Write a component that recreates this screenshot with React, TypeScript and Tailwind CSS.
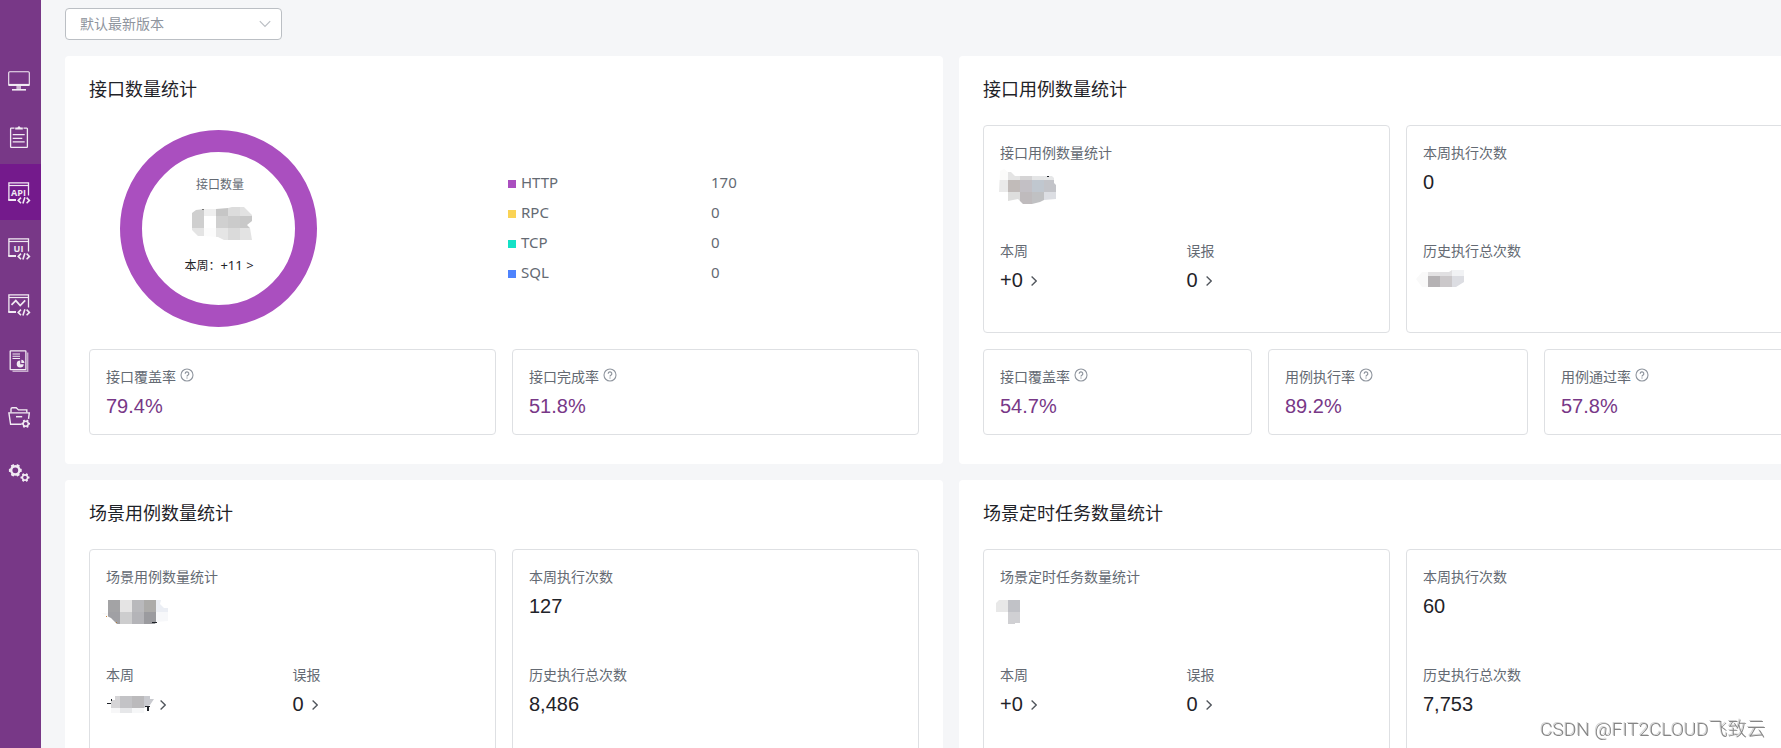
import React from "react";

type Cell = [x: number, y: number, w: number, h: number, fill: string];

interface MosaicShape {
  id: string;
  dx: number;
  dy: number;
  clip: string;
  cells: Cell[];
  specks?: Cell[];
}

// Pixelated blocks that hide sensitive counts
const MOSAICS: Record<string, MosaicShape> = {
  apiTotal: {
    id: "api-total",
    dx: 72,
    dy: 77,
    clip: "0,6 4,3 12,2 24,2 36,1 40,0 52,0 60,8 60,14 55,18 58,21 60,33 32,33 26,30 12,29 6,29 0,23",
    cells: [
      [0, 0, 12, 9, "#cfcfcf"], [12, 0, 12, 9, "#efefef"], [24, 0, 12, 9, "#c6c6c6"], [36, 0, 12, 9, "#dcdcdc"], [48, 0, 12, 9, "#e2e2e2"],
      [0, 9, 12, 12, "#cfcfcf"], [24, 9, 12, 12, "#d0d0d0"], [36, 9, 12, 12, "#cbcbcb"], [48, 9, 12, 12, "#c8c8c8"],
      [0, 21, 12, 12, "#e4e4e4"], [12, 21, 12, 12, "#fcfcfc"], [24, 21, 12, 12, "#e5e5e5"], [36, 21, 12, 12, "#dadada"], [48, 21, 12, 12, "#e3e3e3"],
    ],
    specks: [[10, 2, 2, 1, "#777777"]],
  },
  apiCase: {
    id: "api-case",
    dx: -1,
    dy: 1,
    clip: "1,2 5,0 9,3 12,3 16,7 53,7 55,9 55,14 57,16 57,30 45,31 41,33 33,35 24,35 19,30 9,32 9,23 0,23",
    cells: [
      [0, 0, 9, 11, "#fbfbfa"], [9, 0, 12, 11, "#e4e4e4"], [21, 0, 12, 11, "#d5d4d5"], [33, 0, 12, 11, "#e4e5e6"], [45, 0, 12, 11, "#e6e7e8"],
      [0, 11, 9, 12, "#eaeaea"], [9, 11, 12, 12, "#c1bbb9"], [21, 11, 12, 12, "#c3c0c5"], [33, 11, 12, 12, "#c0c7cf"], [45, 11, 12, 12, "#c3c4c9"],
      [9, 23, 12, 12, "#dededd"], [21, 23, 12, 12, "#bfbbbd"], [33, 23, 12, 12, "#c0c1c3"], [45, 23, 12, 12, "#dcdee3"],
    ],
    specks: [[48, 7, 2, 1, "#1f2329"]],
  },
  apiHistory: {
    id: "api-history",
    dx: -7,
    dy: 4,
    clip: "0,9 6,2 33,2 36,0 48,0 48,12 40,17 6,17",
    cells: [
      [0, 0, 12, 17, "#f9f9f9"], [12, 0, 12, 6, "#e3e2e3"], [24, 0, 12, 6, "#e1e0e2"], [36, 0, 12, 6, "#f1f2f4"],
      [12, 6, 12, 11, "#b5b2b4"], [24, 6, 12, 11, "#cbc8ca"], [36, 6, 12, 11, "#dcdde2"],
    ],
  },
  sceneCase: {
    id: "scene-case",
    dx: -5,
    dy: 8,
    clip: "7,0 60,0 59,4 63,8 67,8 67,21 55,22 54,24 16,24 10,18 0,13 7,13",
    cells: [
      [7, 0, 12, 12, "#a3a3a5"], [19, 0, 12, 12, "#e5e4e4"], [31, 0, 12, 12, "#b9b9bc"], [43, 0, 12, 12, "#acaba9"], [55, 0, 12, 12, "#ebeef4"],
      [0, 12, 7, 12, "#fafafa"], [7, 12, 12, 12, "#a0a0a4"], [19, 12, 12, 12, "#cdcdce"], [31, 12, 12, 12, "#b4b4b8"], [43, 12, 12, 12, "#9b9b9f"], [55, 12, 12, 12, "#f7f8fa"],
    ],
    specks: [[51, 22, 5, 1, "#1f2329"], [5, 16, 1, 1, "#d08a3a"], [15, 22, 1, 1, "#b07a3a"]],
  },
  sceneWeek: {
    id: "scene-week",
    dx: 1,
    dy: 6,
    clip: "8,0 43,0 43,3 47,3 43,9 37,12 37,17 4,17 4,4 8,4",
    cells: [
      [4, 0, 9, 12, "#d6d5d7"], [13, 0, 12, 12, "#c3c3c6"], [25, 0, 12, 12, "#bbbabc"], [37, 0, 10, 12, "#c9cacf"],
      [4, 12, 9, 5, "#f7f7f8"], [13, 12, 12, 5, "#e6e7e9"], [25, 12, 12, 5, "#f6f7f8"],
    ],
    specks: [[0, 7, 4, 1, "#1f2329"], [4, 3, 1, 2, "#1f2329"], [38, 10, 5, 1, "#1f2329"], [40, 11, 2, 4, "#1f2329"]],
  },
  task: {
    id: "task",
    dx: -4,
    dy: 8,
    clip: "0,3 3,0 24,0 24,23 19,23 19,24 12,24 12,12 0,12",
    cells: [[0, 0, 12, 12, "#e8e8e8"], [12, 0, 12, 12, "#c1c2c7"], [12, 12, 12, 12, "#d0d0d3"]],
  },
};

function MosaicCells({ shape }: { shape: MosaicShape }) {
  return (
    <g transform={`translate(${shape.dx} ${shape.dy})`} shapeRendering="crispEdges">
      <clipPath id={shape.id}>
        <polygon points={shape.clip} />
      </clipPath>
      <g clipPath={`url(#${shape.id})`}>
        {shape.cells.map(([x, y, w, h, fill]) => (
          <rect key={`${x}-${y}`} x={x} y={y} width={w} height={h} fill={fill} />
        ))}
      </g>
      {shape.specks?.map(([x, y, w, h, fill]) => (
        <rect key={`${x}-${y}`} x={x} y={y} width={w} height={h} fill={fill} />
      ))}
    </g>
  );
}

function Mosaic({ shape }: { shape: MosaicShape }) {
  return (
    <svg width="46" height="28" className="overflow-visible" aria-hidden="true">
      <MosaicCells shape={shape} />
    </svg>
  );
}

function Gear({ cx, cy, r, hole }: { cx: number; cy: number; r: number; hole: number }) {
  const teeth = [30, 90, 150, 210, 270, 330];
  return (
    <g transform={`translate(${cx} ${cy})`}>
      <circle r={(r + hole) / 2} strokeWidth={r - hole} />
      {teeth.map((a) => (
        <rect
          key={a}
          x={-r * 0.3}
          y={-r - 1}
          width={r * 0.6}
          height={1.8}
          rx={0.4}
          fill="currentColor"
          stroke="none"
          transform={`rotate(${a})`}
        />
      ))}
    </g>
  );
}

function CodeWindow({ children }: { children: React.ReactNode }) {
  return (
    <g transform="translate(0 -1)">
      <path d="M21.5 15.5V2.8H1.9v17.4" strokeWidth="1.3" />
      <path d="M2 5.5h20" strokeWidth="1.2" />
      <path d="M1.3 20h7.7" strokeWidth="2" />
      <path d="M14 17.6l-2.8 2.8 2.8 2.8M19.6 17.6l2.8 2.8-2.8 2.8M17.9 17.2l-2 6.4" strokeWidth="1.6" />
      {children}
    </g>
  );
}

function IconText({ children }: { children: string }) {
  return (
    <text
      x="11.5"
      y="15.5"
      textAnchor="middle"
      fill="currentColor"
      stroke="none"
      className="font-['Open_Sans',sans-serif] text-[9px] font-bold"
    >
      {children}
    </text>
  );
}

const NAV = [
  {
    label: "工作台",
    icon: (
      <>
        <rect x="1.7" y="2.8" width="20.6" height="13.7" rx="1" strokeWidth="1.1" />
        <path d="M1.7 15.9h20.6" strokeWidth="2" />
        <path d="M11.7 17v3" strokeWidth="4.6" opacity="0.7" />
        <path d="M5 20.8h14" strokeWidth="1.6" />
      </>
    ),
  },
  {
    label: "测试跟踪",
    icon: (
      <>
        <path d="M7.5 3.2H4.2a.6.6 0 0 0-.6.6v17.9c0 .4.3.6.6.6h15.6c.4 0 .6-.2.6-.6V3.8a.6.6 0 0 0-.6-.6h-3.3" strokeWidth="1.3" />
        <path d="M8.2 4.6V2.4h2.2L12 .9l1.6 1.5h2.2v2.2z" fill="currentColor" stroke="none" />
        <path d="M5.7 9.7h12M5.7 13.3h9.6M5.7 16.9h12" strokeWidth="1.2" />
      </>
    ),
  },
  { label: "接口测试", active: true, icon: <CodeWindow><IconText>API</IconText></CodeWindow> },
  { label: "UI 测试", icon: <CodeWindow><IconText>UI</IconText></CodeWindow> },
  {
    label: "性能测试",
    icon: (
      <CodeWindow>
        <path d="M4.5 12.8l4.3-4.2 4.4 5 5-5.2" strokeWidth="1.7" />
      </CodeWindow>
    ),
  },
  {
    label: "报表统计",
    icon: (
      <>
        <rect x="3.2" y="1.9" width="15.7" height="18.8" rx="0.4" strokeWidth="1.3" />
        <path d="M20.7 3.5v18.8H5.5" strokeWidth="1.4" opacity="0.65" />
        <path d="M5.5 5H13M5.5 7.3H13M5.5 9.5H13" strokeWidth="1.1" />
        <path d="M13.2 11.5a3.5 3.5 0 1 0 3.5 3.7h-3.5z" fill="currentColor" stroke="none" />
        <path d="M14.3 10.8a3.4 3.4 0 0 1 3.1 3.3h-3.1z" fill="currentColor" stroke="none" />
      </>
    ),
  },
  {
    label: "项目设置",
    icon: (
      <>
        <path d="M4 7.5V4c0-.8.5-1.3 1.3-1.3h3.9l2.3 2.2h8.3v2.6" strokeWidth="1.4" />
        <path d="M14.5 19.3H3.6L1.9 7.9h20.4l-.8 6" strokeWidth="1.4" />
        <path d="M9 11.7h6.2" strokeWidth="1.5" />
        <Gear cx={18.7} cy={18.7} r={3.3} hole={1.8} />
      </>
    ),
  },
  {
    label: "系统设置",
    icon: (
      <>
        <Gear cx={8.3} cy={9.3} r={5.4} hole={2.9} />
        <Gear cx={18} cy={16.5} r={3.5} hole={1.8} />
      </>
    ),
  },
];

function Sidebar() {
  return (
    <nav className="w-[41px] shrink-0 bg-[#783887] pt-[52px] text-white">
      {NAV.map((item) => (
        <a
          key={item.label}
          href="#"
          aria-label={item.label}
          className={item.active ? "flex h-14 items-center bg-[#741a8c] pt-0.5 pl-[7px]" : "flex h-14 items-center pt-0.5 pl-[7px]"}
        >
          <svg width="24" height="24" viewBox="0 0 24 24" fill="none" stroke="currentColor" className="overflow-visible opacity-90">
            {item.icon}
          </svg>
        </a>
      ))}
    </nav>
  );
}

function Panel({ title, children }: { title: string; children: React.ReactNode }) {
  return (
    <section className="rounded bg-white px-6 pt-5 pb-[29px]">
      <h2 className="mb-[21px] text-lg leading-7">{title}</h2>
      <div className="flex flex-col gap-4">{children}</div>
    </section>
  );
}

function Stat({ label, children }: { label: string; children: React.ReactNode }) {
  return (
    <div>
      <p className="text-sm leading-[22px] text-[#646a73]">{label}</p>
      <div className="mt-1 flex h-7 items-center text-xl leading-7">{children}</div>
    </div>
  );
}

function StatLink({ children }: { children: React.ReactNode }) {
  return (
    <a href="#" className="flex items-center gap-2">
      {children}
      <svg width="6" height="12" viewBox="0 0 6 12" fill="none" stroke="#50555c" strokeWidth="1.3" className="mt-0.5">
        <path d="M.6 1.5L5.2 6 .6 10.5" />
      </svg>
    </a>
  );
}

const CARD = "rounded border border-[#dee0e3]";

interface CountCardsProps {
  title: string;
  total: React.ReactNode;
  week: React.ReactNode;
  weekRuns: string;
  historyRuns: React.ReactNode;
}

function CountCards({ title, total, week, weekRuns, historyRuns }: CountCardsProps) {
  return (
    <div className="grid grid-cols-2 gap-4">
      <div className={`${CARD} flex h-52 flex-col gap-11 p-4`}>
        <Stat label={title}>{total}</Stat>
        <div className="grid grid-cols-2">
          <Stat label="本周">
            <StatLink>{week}</StatLink>
          </Stat>
          <Stat label="误报">
            <StatLink>0</StatLink>
          </Stat>
        </div>
      </div>
      <div className={`${CARD} flex h-52 flex-col gap-11 p-4`}>
        <Stat label="本周执行次数">{weekRuns}</Stat>
        <Stat label="历史执行总次数">{historyRuns}</Stat>
      </div>
    </div>
  );
}

function RateCard({ label, value }: { label: string; value: string }) {
  return (
    <div className={`${CARD} px-4 pt-4 pb-3.5`}>
      <div className="flex gap-1 text-sm leading-[22px] text-[#646a73]">
        {label}
        <svg width="14" height="14" viewBox="0 0 14 14" fill="none" stroke="#8f959e" className="mt-0.5">
          <circle cx="7" cy="7" r="6" strokeWidth="1.1" />
          <path d="M5.2 5.7a1.8 1.8 0 1 1 2.7 1.5c-.6.4-.9.6-.9 1.2" strokeWidth="1.2" />
          <path d="M7 9.4v1.2" strokeWidth="1.3" />
        </svg>
      </div>
      <p className="mt-1 text-xl leading-7 text-[#783887]">{value}</p>
    </div>
  );
}

const PROTOCOLS = [
  { name: "HTTP", count: 170, color: "#aa4fbf" },
  { name: "RPC", count: 0, color: "#fad355" },
  { name: "TCP", count: 0, color: "#14e1c6" },
  { name: "SQL", count: 0, color: "#4e83fd" },
];

function ApiDonut() {
  return (
    <svg width="197" height="197" viewBox="0 0 197 197" role="img" aria-label="接口数量">
      <circle cx="98.5" cy="98.5" r="87.5" fill="none" stroke="#aa4fbf" strokeWidth="22" />
      <text x="100" y="59" textAnchor="middle" fill="#646a73" className="text-xs">
        接口数量
      </text>
      <MosaicCells shape={MOSAICS.apiTotal} />
      <text x="99" y="140" textAnchor="middle" fill="#1f2329" className="font-['Noto_Sans','Noto_Sans_CJK_SC',sans-serif] text-xs">
        本周：<tspan className="text-[13px]">+11 &gt;</tspan>
      </text>
    </svg>
  );
}

function ApiCountPanel() {
  return (
    <Panel title="接口数量统计">
      <div className="grid h-52 grid-cols-2 items-center">
        <div className="pb-px pl-[31px]">
          <ApiDonut />
        </div>
        <table className="mb-1 ml-1 w-[300px] table-fixed font-['Noto_Sans',sans-serif] text-[15px] text-[#646a73]">
          <tbody>
            {PROTOCOLS.map((p) => (
              <tr key={p.name} className="h-[30px]">
                <th className="w-[203px] p-0 text-left font-normal">
                  <span className="flex items-center gap-[5px]">
                    <span className="mt-1 size-2" style={{ backgroundColor: p.color }} />
                    {p.name}
                  </span>
                </th>
                <td className="p-0">{p.count}</td>
              </tr>
            ))}
          </tbody>
        </table>
      </div>
      <div className="grid grid-cols-2 gap-4">
        <RateCard label="接口覆盖率" value="79.4%" />
        <RateCard label="接口完成率" value="51.8%" />
      </div>
    </Panel>
  );
}

export default function App() {
  return (
    <div className="flex h-screen overflow-hidden bg-[#f5f6f8] font-['Liberation_Sans','Noto_Sans_CJK_SC',sans-serif] text-[#1f2329]">
      <Sidebar />
      <main className="min-w-0 flex-1 overflow-hidden pt-2 pl-6">
        <div className="relative mb-4 w-[217px]">
          <select
            aria-label="版本"
            className="h-8 w-full appearance-none rounded border border-[#bbbfc4] bg-white px-3.5 text-sm text-[#8f959e]"
          >
            <option>默认最新版本</option>
          </select>
          <svg
            width="12"
            height="8"
            viewBox="0 0 12 8"
            fill="none"
            stroke="#bbbfc4"
            strokeWidth="1.2"
            className="pointer-events-none absolute top-3 right-[11px]"
          >
            <path d="M.8 1.2L6 6.5l5.2-5.3" />
          </svg>
        </div>
        {/* Two wide columns; the right one runs past narrower windows */}
        <div className="grid min-w-[1772px] grid-cols-2 gap-4">
          <ApiCountPanel />
          <Panel title="接口用例数量统计">
            <CountCards
              title="接口用例数量统计"
              total={<Mosaic shape={MOSAICS.apiCase} />}
              week="+0"
              weekRuns="0"
              historyRuns={<Mosaic shape={MOSAICS.apiHistory} />}
            />
            <div className="grid grid-cols-[269fr_260fr_269fr] gap-4">
              <RateCard label="接口覆盖率" value="54.7%" />
              <RateCard label="用例执行率" value="89.2%" />
              <RateCard label="用例通过率" value="57.8%" />
            </div>
          </Panel>
          <Panel title="场景用例数量统计">
            <CountCards
              title="场景用例数量统计"
              total={<Mosaic shape={MOSAICS.sceneCase} />}
              week={<Mosaic shape={MOSAICS.sceneWeek} />}
              weekRuns="127"
              historyRuns="8,486"
            />
          </Panel>
          <Panel title="场景定时任务数量统计">
            <CountCards
              title="场景定时任务数量统计"
              total={<Mosaic shape={MOSAICS.task} />}
              week="+0"
              weekRuns="60"
              historyRuns="7,753"
            />
          </Panel>
        </div>
      </main>
      <p className="fixed right-[15px] bottom-1 font-['Roboto','Noto_Sans_CJK_SC',sans-serif] text-[19px] leading-7 font-light text-[#858585] [text-shadow:-1px_-1px_0_#d4d4d4]">
        CSDN @FIT2CLOUD飞致云
      </p>
    </div>
  );
}
